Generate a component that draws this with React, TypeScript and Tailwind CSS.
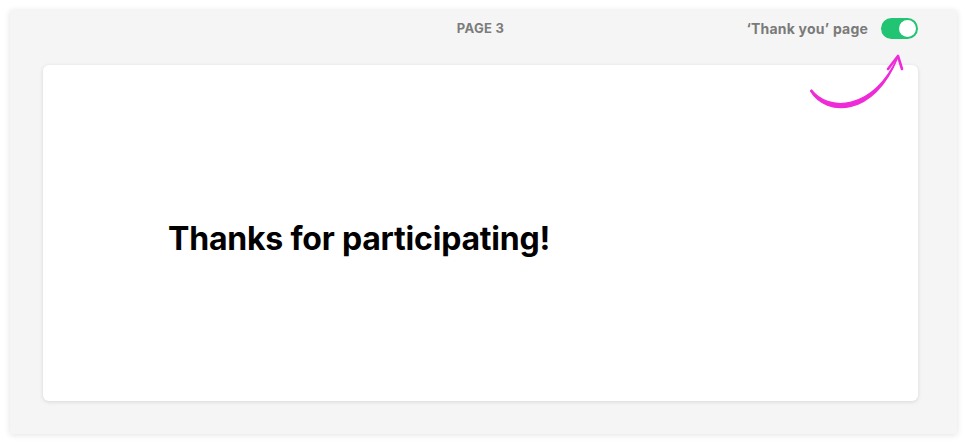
export default function App() {
  return (
    <div className="relative h-[443px] w-[966px] bg-white font-['Inter',sans-serif]">
      <div className="absolute left-[10px] top-[10px] flex h-[424px] w-[947px] flex-col bg-[#f5f5f5] pl-[33px] pr-[39px] pt-2 shadow-[0_1px_6px_rgba(0,0,0,0.12)]">
        {/* header: page label centered over the card, toggle at right */}
        <div className="relative flex h-[21px] items-center justify-end">
          <span className="absolute left-1/2 -translate-x-1/2 text-[13px] font-bold tracking-[0.3px] text-[#7b7b7b]">
            PAGE 3
          </span>
          <span className="mr-[13px] text-[14px] font-bold tracking-[0.2px] text-[#7a7a7a]">‘Thank you’ page</span>
          <button
            type="button"
            aria-label="Thank you page toggle"
            className="flex h-[21px] w-[37px] items-center justify-end rounded-full bg-[#20c472] px-[2px]"
          >
            <span className="h-[17px] w-[17px] rounded-full bg-white" />
          </button>
        </div>

        <div className="mt-[26px] h-[336px] rounded-[6px] bg-white pl-[125px] pt-[154px] shadow-[0_1px_4px_rgba(0,0,0,0.12)]">
          <h1 className="text-[32px] font-bold leading-[40px] tracking-[-0.2px] text-black">
            Thanks for participating!
          </h1>
        </div>
      </div>

      {/* hand-drawn pointer arrow */}
      <svg
        className="absolute left-[800px] top-[45px]"
        width="110"
        height="70"
        viewBox="0 0 110 70"
        fill="none"
      >
        <path
          d="M10.5 46 C26 72 74 72 97.5 13 C72 66 28 67 11.5 45 Z"
          fill="#ef2bd8"
          stroke="#ef2bd8"
          strokeWidth="1.3"
          strokeLinejoin="round"
        />
        <path
          d="M88 24 L98 11 L102 24"
          stroke="#ef2bd8"
          strokeWidth="2.6"
          strokeLinecap="round"
          strokeLinejoin="round"
        />
      </svg>
    </div>
  );
}
